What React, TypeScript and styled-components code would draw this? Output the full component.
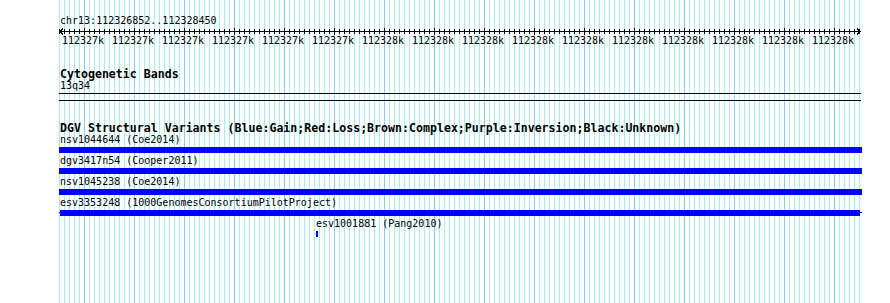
import styled, { createGlobalStyle } from "styled-components";

const GlobalStyle = createGlobalStyle`
  html, body {
    margin: 0;
    padding: 0;
    background: #ffffff;
  }
  body {
    font-family: "DejaVu Sans Mono", "Liberation Mono", monospace;
    color: #000000;
  }
`;

const VIEW_START = 112326852;
const VIEW_END = 112328450;
const VIEW_PX = 800;
const BP_PER_PX = (VIEW_END - VIEW_START) / VIEW_PX;

const Page = styled.div`
  min-height: 303px;
  padding-left: 59px;
`;

// the light blue grid that runs behind every track
const Tracks = styled.div`
  width: 801px;
  min-height: 303px;
  padding-top: 15px;
  box-sizing: border-box;
  background-image: repeating-linear-gradient(
      to right,
      transparent 0 25px,
      #8ccaf0 25px 26px,
      transparent 26px 50px
    ),
    repeating-linear-gradient(to right, #a8ecee 0 1px, transparent 1px 5px);
`;

const Location = styled.div`
  padding-left: 1px;
  font-size: 10px;
  line-height: 12px;
  white-space: nowrap;
`;

const RulerSvg = styled.svg`
  display: block;
  overflow: visible;
`;

const TickLabels = styled.div`
  display: flex;
  margin-left: -1px;
  font-size: 10px;
  line-height: 12px;
`;

const TickLabel = styled.span`
  flex: 0 0 50px;
  text-align: center;
  white-space: nowrap;
`;

const Track = styled.section<{ $gap: number }>`
  margin-top: ${(p) => p.$gap}px;
`;

const TrackTitle = styled.h2<{ $lh: number }>`
  margin: 0;
  padding-left: 1px;
  font-size: 11.6px;
  font-weight: bold;
  line-height: ${(p) => p.$lh}px;
  white-space: nowrap;
`;

const BandName = styled.div`
  padding-left: 1px;
  font-size: 10px;
  line-height: 12px;
`;

const Chromosome = styled.div`
  width: 802px;
  height: 6px;
  margin-top: 1px;
  border-top: 1px solid #000000;
  border-bottom: 1px solid #000000;
`;

const FeatureRow = styled.div`
  height: 21px;
`;

const FeatureLabel = styled.div<{ $left: number }>`
  padding-left: ${(p) => p.$left}px;
  font-size: 10px;
  line-height: 13px;
  height: 14px;
  white-space: nowrap;
`;

const FeatureGlyph = styled.div<{ $left: number; $width: number; $line: boolean }>`
  position: relative;
  margin-left: ${(p) => p.$left}px;
  width: ${(p) => p.$width}px;
  height: 6px;
  background: #0000ff;

  &::before {
    content: "";
    display: ${(p) => (p.$line ? "block" : "none")};
    position: absolute;
    left: -1px;
    right: -2px;
    top: 2px;
    height: 1px;
    background: #0000ff;
  }
`;

interface IFeature {
  name: string;
  source: string;
  left: number;
  width: number;
  clipped?: boolean;
}

const features: IFeature[] = [
  { name: "nsv1044644", source: "Coe2014", left: 0, width: 803 },
  { name: "dgv3417n54", source: "Cooper2011", left: 0, width: 803 },
  { name: "nsv1045238", source: "Coe2014", left: 0, width: 803 },
  {
    name: "esv3353248",
    source: "1000GenomesConsortiumPilotProject",
    left: 1,
    width: 800,
    clipped: true,
  },
  { name: "esv1001881", source: "Pang2010", left: 257, width: 2 },
];

function Ruler() {
  const ticks = [];
  for (let i = 0; i <= 160; i++) {
    const x = i * 5 + 0.5;
    const major = i % 10 === 5;
    ticks.push(
      <line
        key={i}
        x1={x}
        x2={x}
        y1={major ? 1 : 2}
        y2={major ? 8 : 7}
        stroke="#000"
      />
    );
  }
  return (
    <RulerSvg width={803} height={8} shapeRendering="crispEdges">
      <line x1={1} x2={802} y1={4.5} y2={4.5} stroke="#000" />
      {ticks}
      <polyline points="4,1.5 1,4.5 4,7.5" fill="none" stroke="#000" />
      <polyline points="798,1.5 801,4.5 798,7.5" fill="none" stroke="#000" />
    </RulerSvg>
  );
}

function App() {
  const labels = Array.from({ length: 16 }, (_, i) => {
    const bp = VIEW_START + (25 + i * 50) * BP_PER_PX;
    return `${Math.round(bp / 1000)}k`;
  });

  return (
    <Page>
      <GlobalStyle />
      <Tracks>
        <Location>
          chr13:{VIEW_START}..{VIEW_END}
        </Location>
        <Ruler />
        <TickLabels>
          {labels.map((l, i) => (
            <TickLabel key={i}>{l}</TickLabel>
          ))}
        </TickLabels>

        <Track $gap={22}>
          <TrackTitle $lh={11}>Cytogenetic Bands</TrackTitle>
          <BandName>13q34</BandName>
          <Chromosome />
        </Track>

        <Track $gap={23}>
          <TrackTitle $lh={9}>
            DGV Structural Variants
            (Blue:Gain;Red:Loss;Brown:Complex;Purple:Inversion;Black:Unknown)
          </TrackTitle>
          {features.map((f) => (
            <FeatureRow key={f.name}>
              <FeatureLabel $left={Math.max(f.left, 1)}>
                {f.name} ({f.source})
              </FeatureLabel>
              <FeatureGlyph $left={f.left} $width={f.width} $line={!!f.clipped} />
            </FeatureRow>
          ))}
        </Track>
      </Tracks>
    </Page>
  );
}

export default App;
